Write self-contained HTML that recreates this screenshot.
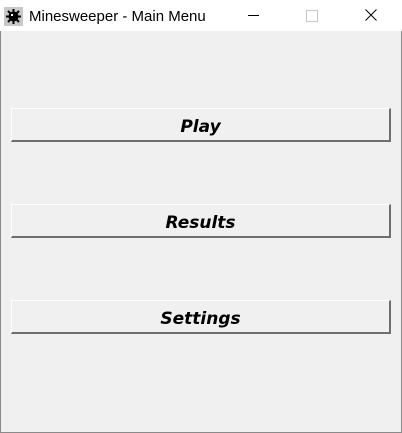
<!DOCTYPE html>
<html><head><style>
html,body{margin:0;padding:0;}
body{width:402px;height:433px;position:relative;overflow:hidden;background:#f0f0f0;font-family:"Liberation Sans",sans-serif;}
.frame{position:absolute;left:0;top:0;width:400px;height:432px;border:1px solid #8a8a8a;border-top:none;}
.title{position:absolute;left:0;top:0;width:402px;height:31px;background:#fff;}
.title span{position:absolute;left:29px;top:8px;font-size:15px;color:#000;font-family:"Liberation Sans","DejaVu Sans",sans-serif;}
.icon{position:absolute;left:4px;top:7px;width:19px;height:19px;background:#c8c8c8;}
.btn{position:absolute;left:11px;width:377px;height:31px;background:#f0f0f0;border-top:1px solid #fff;border-left:1px solid #fff;border-right:2px solid #6e6e6e;border-bottom:2px solid #6e6e6e;box-sizing:content-box;text-align:center;font-family:"DejaVu Sans",sans-serif;font-weight:bold;font-style:italic;font-size:17px;line-height:36px;color:#000;}
</style></head><body>
<div class="frame"></div>
<div class="title">
<div class="icon"><svg width="19" height="19" viewBox="0 0 19 19"><g stroke="#000" stroke-width="2"><line x1="9.5" y1="2" x2="9.5" y2="17"/><line x1="2" y1="9.5" x2="17" y2="9.5"/><line x1="4" y1="4" x2="15" y2="15"/><line x1="15" y1="4" x2="4" y2="15"/></g><circle cx="9.5" cy="9.5" r="5" fill="#000"/><rect x="7" y="7" width="2" height="2" fill="#fff"/></svg></div>
<span>Minesweeper - Main Menu</span>
<div style="position:absolute;left:248px;top:15px;width:11px;height:1px;background:#000"></div>
<div style="position:absolute;left:306px;top:10px;width:10px;height:10px;border:1px solid #c8c8c8"></div>
<svg style="position:absolute;left:365px;top:9px" width="12" height="12"><path d="M0.5 0.5L11.5 11.5M11.5 0.5L0.5 11.5" stroke="#000" stroke-width="1"/></svg>
</div>
<div class="btn" style="top:108px">Play</div>
<div class="btn" style="top:204px">Results</div>
<div class="btn" style="top:300px">Settings</div>
</body></html>
